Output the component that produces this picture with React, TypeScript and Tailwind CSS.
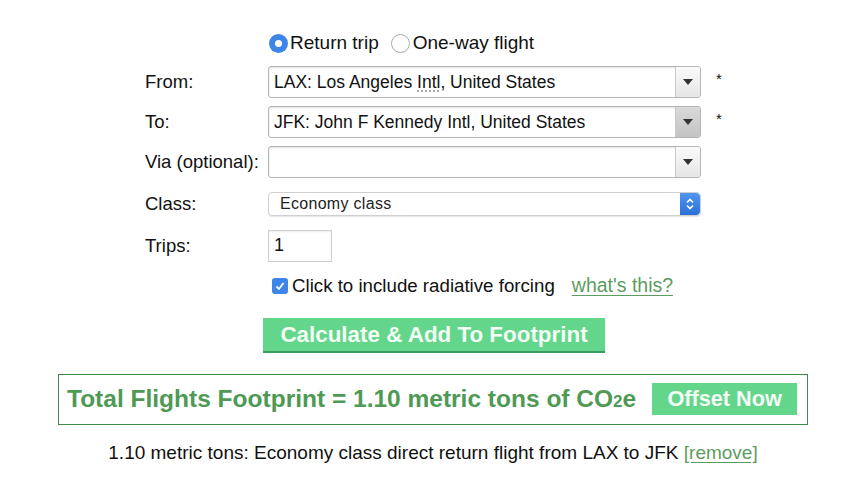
import { useState } from "react";

function ComboArrow({ pressed }: { pressed?: boolean }) {
  return (
    <div
      className={`flex w-[25px] shrink-0 items-center justify-center border-l border-[#c8c8c8] ${
        pressed ? "bg-gradient-to-b from-[#d9d9d9] to-[#c4c4c4]" : "bg-gradient-to-b from-[#fafafa] to-[#e6e6e6]"
      }`}
    >
      <svg width="10" height="6" viewBox="0 0 10 6">
        <path d="M0 0h10L5 6z" fill="#333" />
      </svg>
    </div>
  );
}

function Combo({ value, pressed, dotted }: { value: string; pressed?: boolean; dotted?: boolean }) {
  return (
    <div className="flex h-[32px] w-[433px] overflow-hidden rounded-[3px] border border-[#b5b5b5] bg-white shadow-[inset_0_1px_2px_rgba(0,0,0,0.12)]">
      <div className="flex flex-1 items-center pl-[5px] text-[17.5px] text-[#111]">
        {dotted ? (
          <span>
            LAX: Los Angeles{" "}
            <span className="underline decoration-dotted decoration-[#999] underline-offset-[3px]">Intl</span>, United States
          </span>
        ) : (
          value
        )}
      </div>
      <ComboArrow pressed={pressed} />
    </div>
  );
}

function Row({ label, children }: { label: string; children: React.ReactNode }) {
  return (
    <div className="flex items-center">
      <div className="w-[123px] text-[18.5px] text-[#111]">{label}</div>
      {children}
    </div>
  );
}

export default function App() {
  const [trip, setTrip] = useState("return");
  const [rf, setRf] = useState(true);

  return (
    <div className="min-h-[491px] w-[850px] bg-white font-['Liberation_Sans',Arial,sans-serif] text-[#111]">
      <div className="flex flex-col pl-[145px] pt-[31px]">
        <div className="flex h-[24px] items-center pl-[124px] text-[19px]">
          <button onClick={() => setTrip("return")} className="flex items-center">
            <span
              className={`flex h-[19px] w-[19px] items-center justify-center rounded-full ${
                trip === "return" ? "bg-[#3d85e6]" : "border border-[#aaa] bg-white"
              }`}
            >
              {trip === "return" && <span className="h-[7px] w-[7px] rounded-full bg-white" />}
            </span>
            <span className="ml-[2px]">Return trip</span>
          </button>
          <button onClick={() => setTrip("oneway")} className="ml-[12px] flex items-center">
            <span
              className={`flex h-[19px] w-[19px] items-center justify-center rounded-full ${
                trip === "oneway" ? "bg-[#3d85e6]" : "border border-[#aaa] bg-white"
              }`}
            >
              {trip === "oneway" && <span className="h-[7px] w-[7px] rounded-full bg-white" />}
            </span>
            <span className="ml-[3px]">One-way flight</span>
          </button>
        </div>

        <div className="mt-[11px] flex flex-col gap-[8px]">
          <Row label="From:">
            <Combo value="" dotted />
            <span className="ml-[15px] self-start pt-[2px] text-[15px]">*</span>
          </Row>
          <Row label="To:">
            <Combo value="JFK: John F Kennedy Intl, United States" pressed />
            <span className="ml-[15px] self-start pt-[2px] text-[15px]">*</span>
          </Row>
          <Row label="Via (optional):">
            <Combo value="" />
          </Row>
        </div>

        <div className="mt-[12px]">
          <Row label="Class:">
            <div className="flex h-[24px] w-[433px] overflow-hidden rounded-[4px] border border-[#cfcfcf] bg-white shadow-[0_1px_1px_rgba(0,0,0,0.1)]">
              <div className="flex flex-1 items-center pl-[11px] text-[16px] tracking-[0.3px] text-[#222]">
                Economy class
              </div>
              <div className="flex w-[20px] items-center justify-center rounded-r-[4px] bg-gradient-to-b from-[#4f97f2] to-[#2a6fd8]">
                <svg width="10" height="14" viewBox="0 0 10 14">
                  <path d="M2 5.5L5 2.5L8 5.5M2 8.5L5 11.5L8 8.5" stroke="#fff" strokeWidth="1.6" fill="none" />
                </svg>
              </div>
            </div>
          </Row>
        </div>

        <div className="mt-[12px]">
          <Row label="Trips:">
            <div className="flex h-[32px] w-[64px] items-center border border-[#cfcfcf] pl-[5px] text-[18px] shadow-[inset_0_1px_2px_rgba(0,0,0,0.08)]">
              1
            </div>
          </Row>
        </div>

        <div className="mt-[12px] flex h-[24px] items-center pl-[127px] text-[18.7px]">
          <button
            onClick={() => setRf(!rf)}
            className={`flex h-[16px] w-[16px] items-center justify-center rounded-[3px] ${
              rf ? "bg-[#3d85e6]" : "border border-[#aaa] bg-white"
            }`}
          >
            {rf && (
              <svg width="12" height="12" viewBox="0 0 12 12">
                <path d="M2.5 6.5L5 9L9.5 3" stroke="#fff" strokeWidth="1.8" fill="none" />
              </svg>
            )}
          </button>
          <span className="ml-[4px]">Click to include radiative forcing</span>
          <a className="ml-[17px] text-[19.5px] text-[#5d9c5f] underline underline-offset-[3px]">what's this?</a>
        </div>

        <div className="mt-[20px] pl-[118px]">
          <button className="h-[35px] w-[342px] border-b-2 border-[#3b9a5e] bg-[#63d68b] text-[22.4px] font-bold text-[#f4fff6]">
            Calculate &amp; Add To Footprint
          </button>
        </div>
      </div>

      <div className="mx-[58px] mt-[21px] flex h-[51px] w-[750px] items-center border border-[#3f8a46] pl-[8px]">
        <span className="text-[24.5px] font-bold text-[#4e9a55]">
          Total Flights Footprint = 1.10 metric tons of CO<span className="text-[17px]">2</span>e
        </span>
        <button className="ml-[16px] h-[32px] w-[145px] bg-[#63d68b] text-[21.7px] font-bold text-[#f4fff6]">Offset Now</button>
      </div>

      <div className="mt-[14px] pl-[16px] text-center text-[19px]">
        1.10 metric tons: Economy class direct return flight from LAX to JFK{" "}
        <a className="text-[#5d9c5f] underline underline-offset-[3px]">[remove]</a>
      </div>
    </div>
  );
}
